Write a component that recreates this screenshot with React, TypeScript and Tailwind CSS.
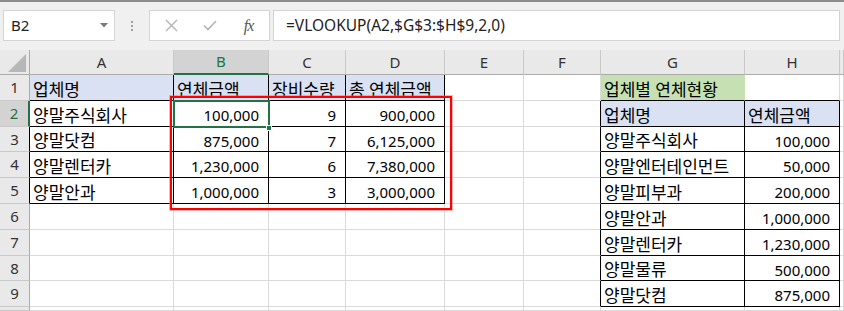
import React from 'react';

const COL_HEADS = ['', 'A', 'B', 'C', 'D', 'E', 'F', 'G', 'H', ''];

// row index 1..9, columns A..H (index 1..8)
const DATA: Record<number, string[]> = {
  1: ['업체명', '연체금액', '장비수량', '총 연체금액', '', '', '업체별 연체현황', ''],
  2: ['양말주식회사', '100,000', '9', '900,000', '', '', '업체명', '연체금액'],
  3: ['양말닷컴', '875,000', '7', '6,125,000', '', '', '양말주식회사', '100,000'],
  4: ['양말렌터카', '1,230,000', '6', '7,380,000', '', '', '양말엔터테인먼트', '50,000'],
  5: ['양말안과', '1,000,000', '3', '3,000,000', '', '', '양말피부과', '200,000'],
  6: ['', '', '', '', '', '', '양말안과', '1,000,000'],
  7: ['', '', '', '', '', '', '양말렌터카', '1,230,000'],
  8: ['', '', '', '', '', '', '양말물류', '500,000'],
  9: ['', '', '', '', '', '', '양말닷컴', '875,000'],
};

const inLeft = (r: number, c: number) => r >= 1 && r <= 5 && c >= 1 && c <= 4;
const inRight = (r: number, c: number) => r >= 2 && r <= 9 && c >= 7 && c <= 8;
const inTable = (r: number, c: number) => inLeft(r, c) || inRight(r, c);

function fillOf(r: number, c: number) {
  if (r === 1 && c >= 1 && c <= 4) return 'blue';
  if (r === 2 && (c === 7 || c === 8)) return 'blue';
  if (r === 1 && c === 7) return 'green';
  return '';
}

// hangul renders a touch bigger than the digits in the sheet font
function SheetText({ text }: { text: string }) {
  const parts = text.split(/([\uAC00-\uD7A3]+(?:\s+[\uAC00-\uD7A3]+)*)/).filter(Boolean);
  return (
    <span className="leading-none">
      {parts.map((p, i) =>
        /[\uAC00-\uD7A3]/.test(p) ? (
          <span key={i} className="text-[17px]">
            {p}
          </span>
        ) : (
          <span key={i} className="text-[15px]">
            {p}
          </span>
        )
      )}
    </span>
  );
}

function HeaderCell({ c }: { c: number }) {
  const sel = c === 2;
  return (
    <div
      className={`flex items-center justify-center text-[15px] border-r border-r-[#c9c9c9] ${
        sel ? 'bg-[#d3d3d3] text-[#217346] border-b-2 border-b-[#217346]' : 'bg-[#e9e9e9] text-[#333] border-b border-b-[#ababab]'
      }`}
    >
      {COL_HEADS[c]}
    </div>
  );
}

function RowHead({ r }: { r: number }) {
  const sel = r === 2;
  let right = 'border-r border-r-[#ababab]';
  if (sel) right = 'border-r-2 border-r-[#217346]';
  else if (r >= 3 && r <= 5) right = 'border-r border-r-black';
  return (
    <div
      className={`flex items-center justify-center text-[15px] border-b border-b-[#c9c9c9] ${right} ${
        sel ? 'bg-[#d3d3d3] text-[#217346]' : 'bg-[#e9e9e9] text-[#333]'
      }`}
    >
      {r <= 9 ? r : ''}
    </div>
  );
}

function DataCell({ r, c }: { r: number; c: number }) {
  const text = DATA[r]?.[c - 1] ?? '';
  const num = /^[\d,]+$/.test(text);
  const fill = fillOf(r, c);
  const rightDark = inTable(r, c) || inTable(r, c + 1);
  const bottomDark = inTable(r, c) || inTable(r + 1, c);

  let bg = 'bg-white';
  let rb = rightDark ? 'border-r-black' : 'border-r-[#dadada]';
  const bb = bottomDark ? 'border-b-black' : 'border-b-[#dadada]';
  if (fill === 'blue') {
    bg = 'bg-[#d9e1f2]';
  } else if (fill === 'green') {
    bg = 'bg-[#c6e0b4]';
    if (!rightDark) rb = 'border-r-[#c6e0b4]';
  }

  return (
    <div
      className={`flex items-center whitespace-nowrap text-black border-r border-b pt-[3px] ${rb} ${bb} ${bg} ${
        num ? 'justify-end pr-[9px]' : 'justify-start pl-[3px]'
      }`}
    >
      {text && <SheetText text={text} />}
    </div>
  );
}

export default function App() {
  const rows = Array.from({ length: 10 }, (_, i) => i + 1);
  const cols = Array.from({ length: 9 }, (_, i) => i + 1);

  return (
    <div
      className="relative w-[844px] h-[311px] overflow-hidden bg-white"
      style={{ fontFamily: '"Noto Sans", "Noto Sans CJK KR", sans-serif' }}
    >
      {/* formula bar */}
      <div className="h-[50px] bg-[#f0f0f0] border-t-2 border-t-[#8c8c8c] flex items-start pt-[8px]">
        <div className="ml-[3px] w-[112px] h-[31px] bg-white border border-[#d4d4d4] flex items-center justify-between pl-[7px] pr-[6px]">
          <span className="text-[15px] text-[#222]">B2</span>
          <svg width="8" height="5" viewBox="0 0 8 5">
            <path d="M0 0 L8 0 L4 4.5 Z" fill="#7a7a7a" />
          </svg>
        </div>
        <div className="w-[34px] h-[31px] flex flex-col items-center justify-center gap-[2px]">
          <div className="w-[2px] h-[2px] bg-[#a0a0a0]" />
          <div className="w-[2px] h-[2px] bg-[#a0a0a0]" />
          <div className="w-[2px] h-[2px] bg-[#a0a0a0]" />
        </div>
        <div className="w-[121px] h-[31px] bg-white border border-[#d4d4d4] flex items-center">
          <div className="w-[42px] flex justify-center">
            <svg width="13" height="13" viewBox="0 0 13 13">
              <path d="M1 1 L12 12 M12 1 L1 12" stroke="#b4b4b4" strokeWidth="1.4" />
            </svg>
          </div>
          <div className="w-[36px] flex justify-center">
            <svg width="14" height="11" viewBox="0 0 14 11">
              <path d="M1 5.5 L5 9.5 L13 1" stroke="#b4b4b4" strokeWidth="1.6" fill="none" />
            </svg>
          </div>
          <div className="flex-1 flex justify-center">
            <span
              className="italic text-[16px] text-[#555] tracking-[-1px]"
              style={{ fontFamily: '"Liberation Serif", serif' }}
            >
              fx
            </span>
          </div>
        </div>
        <div className="ml-[3px] mr-[4px] flex-1 h-[31px] bg-white border border-[#d4d4d4] flex items-center pl-[12px]">
          <span className="text-[15.5px] text-[#222]">=VLOOKUP(A2,$G$3:$H$9,2,0)</span>
        </div>
      </div>

      {/* sheet */}
      <div className="grid grid-cols-[30px_144px_95px_77px_99px_79px_77px_144px_95px_1fr] grid-rows-[25px_26px_26px_25px_26px_26px_26px_26px_25px_26px_1fr] h-[261px]">
        <div className="bg-[#e9e9e9] border-r border-r-[#ababab] border-b border-b-[#ababab] flex items-end justify-end pr-[3px] pb-[2px]">
          <svg width="18" height="18" viewBox="0 0 18 18">
            <path d="M18 0 L18 18 L0 18 Z" fill="#b7b7b7" />
          </svg>
        </div>
        {cols.map((c) => (
          <HeaderCell key={`h${c}`} c={c} />
        ))}
        {rows.map((r) => (
          <React.Fragment key={`r${r}`}>
            <RowHead r={r} />
            {cols.map((c) => (
              <DataCell key={`c${r}-${c}`} r={r} c={c} />
            ))}
          </React.Fragment>
        ))}
      </div>

      {/* active cell B2 */}
      <div className="absolute left-[173px] top-[100px] w-[97px] h-[28px] border-2 border-[#217346]" />
      <div className="absolute left-[266px] top-[125px] w-[6px] h-[6px] bg-[#217346] border border-white" />

      {/* red annotation box */}
      <div className="absolute left-[170px] top-[96px] w-[282px] h-[114px] border-2 border-[#ff0000] shadow-[0_0_0_1px_rgba(255,90,90,0.45)]" />
    </div>
  );
}
